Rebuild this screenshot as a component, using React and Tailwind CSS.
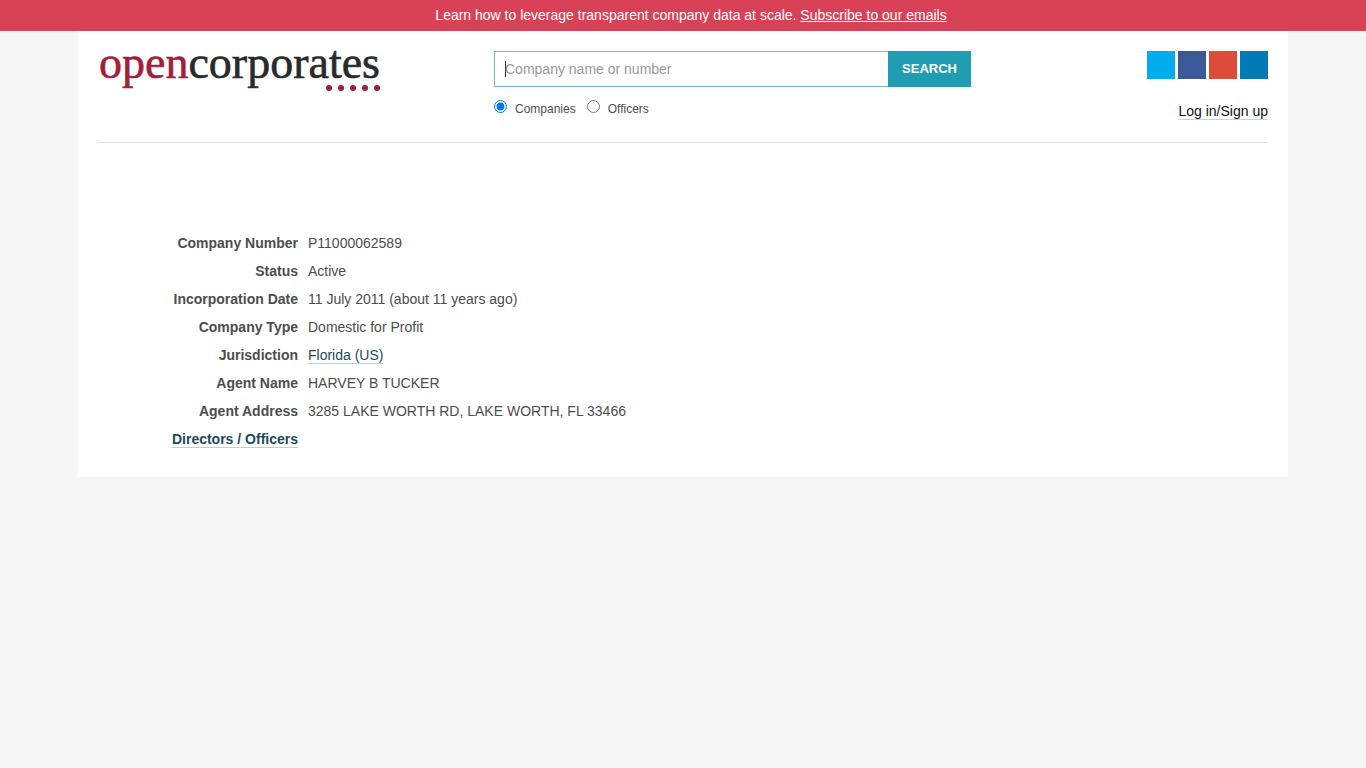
import { useState } from "react";

const socialLinks = [
  { name: "Twitter", color: "bg-[#00aced]" },
  { name: "Facebook", color: "bg-[#3b5998]" },
  { name: "Google Plus", color: "bg-[#dd4b39]" },
  { name: "LinkedIn", color: "bg-[#007bb6]" },
];

const attributes = [
  { label: "Company Number", value: "P11000062589" },
  { label: "Status", value: "Active" },
  { label: "Incorporation Date", value: "11 July 2011 (about 11 years ago)" },
  { label: "Company Type", value: "Domestic for Profit" },
  { label: "Jurisdiction", value: "Florida (US)", href: "#florida" },
  { label: "Agent Name", value: "HARVEY B TUCKER" },
  {
    label: "Agent Address",
    value: "3285 LAKE WORTH RD, LAKE WORTH, FL 33466",
  },
];

const Banner = () => (
  <div className="bg-[#d94256] pt-[5px] pr-4 pb-[6px] pl-8 text-center text-white">
    Learn how to leverage transparent company data at scale.{" "}
    <a href="#subscribe" className="underline">
      Subscribe to our emails
    </a>
  </div>
);

const Logo = () => (
  <a href="#home" aria-label="opencorporates" className="block w-[290px]">
    <svg
      viewBox="0 0 290 48"
      className="block h-[48px] w-[290px] overflow-visible"
    >
      <text
        x="1"
        y="27"
        fontSize="46"
        fill="#272b2c"
        stroke="#272b2c"
        strokeWidth="0.6"
        className="font-['Liberation_Serif',serif]"
      >
        <tspan fill="#a01f3a" stroke="#a01f3a">
          open
        </tspan>
        corporates
      </text>
      <g fill="#a01f3a">
        <circle cx="231" cy="37" r="3" />
        <circle cx="243" cy="37" r="3" />
        <circle cx="255" cy="37" r="3" />
        <circle cx="267" cy="37" r="3" />
        <circle cx="279" cy="37" r="3" />
      </g>
    </svg>
  </a>
);

const SearchForm = () => {
  const [query, setQuery] = useState("");
  const [type, setType] = useState("companies");

  return (
    <form onSubmit={(e) => e.preventDefault()}>
      <div className="flex">
        <div className="relative flex-1">
          <input
            type="text"
            aria-label="Company name or number"
            placeholder="Company name or number"
            value={query}
            onChange={(e) => setQuery(e.target.value)}
            className="block h-9 w-full border border-r-0 border-[#7fb4dc] bg-white px-[10px] placeholder:text-[#999999] outline-none"
          />
          {/* Text cursor */}
          {!query && (
            <span className="pointer-events-none absolute top-[10px] left-[11px] h-4 w-px bg-[#333333]" />
          )}
        </div>
        <button
          type="submit"
          className="h-9 w-[83px] bg-[#219db3] pb-px text-[13px] font-bold text-white"
        >
          SEARCH
        </button>
      </div>

      <div className="mt-3 flex gap-[11px] text-xs leading-5">
        <label className="flex gap-2">
          <input
            type="radio"
            name="type"
            checked={type === "companies"}
            onChange={() => setType("companies")}
            className="mt-px size-[13px]"
          />
          Companies
        </label>
        <label className="flex gap-2">
          <input
            type="radio"
            name="type"
            checked={type === "officers"}
            onChange={() => setType("officers")}
            className="mt-px size-[13px]"
          />
          Officers
        </label>
      </div>
    </form>
  );
};

const App = () => {
  return (
    <div className="min-h-screen bg-[#f6f6f6] font-['Liberation_Sans',Arial,sans-serif] text-sm leading-5 text-[#4d4d4d]">
      <Banner />

      <div className="mx-auto max-w-[1210px] bg-white px-5 pt-5 pb-7">
        {/* Header */}
        <header className="flex flex-wrap border-b border-[#dddddd] pb-[22px]">
          <div className="w-[396px]">
            <Logo />
          </div>

          <div className="w-[477px]">
            <SearchForm />
          </div>

          <div className="ml-auto flex flex-col items-end">
            <div className="flex gap-[3px]">
              {socialLinks.map((link) => (
                <a
                  key={link.name}
                  href="#social"
                  aria-label={link.name}
                  className={`size-7 ${link.color}`}
                />
              ))}
            </div>
            <a
              href="#login"
              className="mt-6 border-b border-[#c5d5da] leading-4 text-[#111111]"
            >
              Log in/Sign up
            </a>
          </div>
        </header>

        {/* Company attributes */}
        <dl className="mt-[90px] grid grid-cols-[200px_1fr] gap-x-[10px] gap-y-2">
          {attributes.map((item) => (
            <div key={item.label} className="contents">
              <dt className="text-right font-bold">{item.label}</dt>
              <dd>
                {item.href ? (
                  <a
                    href={item.href}
                    className="border-b border-[#b5d3da] text-[#1b4a59]"
                  >
                    {item.value}
                  </a>
                ) : (
                  item.value
                )}
              </dd>
            </div>
          ))}
          <dt className="text-right font-bold">
            <a
              href="#officers"
              className="border-b border-[#b5d3da] text-[#1b4a59]"
            >
              Directors / Officers
            </a>
          </dt>
        </dl>
      </div>
    </div>
  );
};

export default App;
